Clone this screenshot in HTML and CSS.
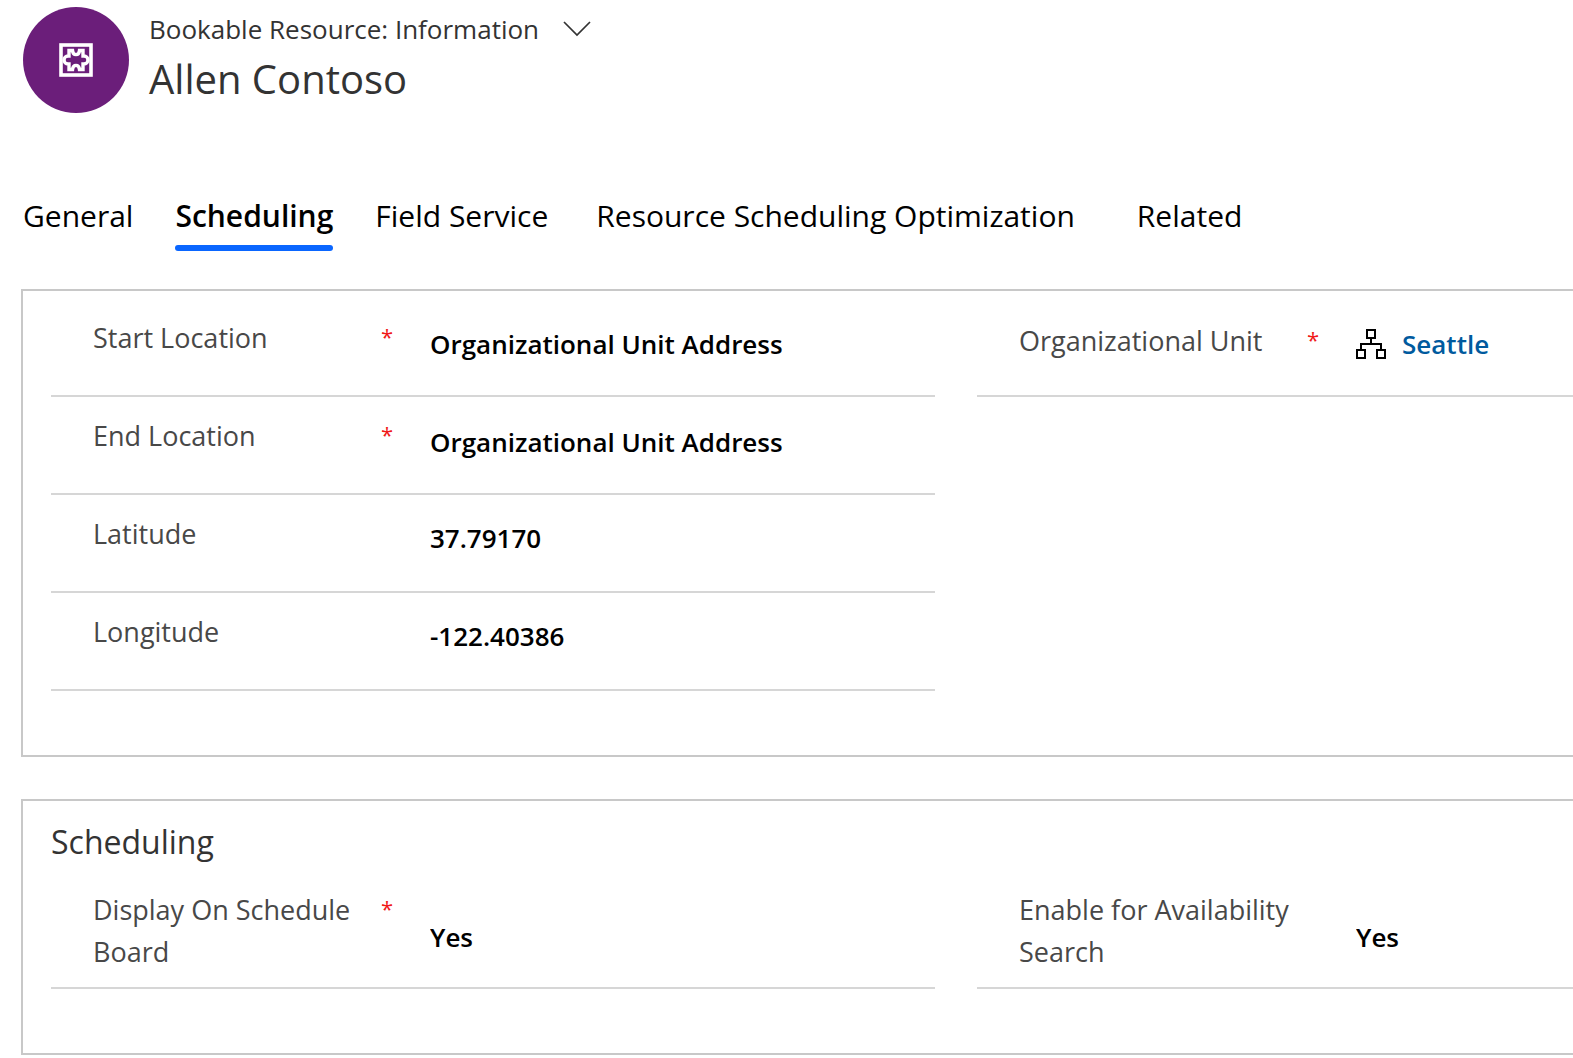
FILE: index.html
```html
<!DOCTYPE html>
<html lang="en">
<head>
<meta charset="utf-8">
<meta name="viewport" content="width=device-width, initial-scale=1">
<title>Bookable Resource: Allen Contoso</title>
<link rel="stylesheet" href="styles.css">
</head>
<body>
<header class="record-header">
  <div class="record-avatar">
    <svg class="record-icon" viewBox="0 0 34 34" aria-hidden="true">
      <rect x="2" y="2" width="30" height="30" fill="none" stroke="#fff" stroke-width="3.600"/>
      <path d="M10 7.500H13.500C14 13 20 13 20.500 7.500H24V13H25A4 4 0 0 1 25 21H24V26.500H20.500C20 21 14 21 13.500 26.500H10V21H9A4 4 0 0 1 9 13H10Z" fill="none" stroke="#fff" stroke-width="3.400"/>
    </svg>
  </div>
  <div class="record-titles">
    <button class="form-switcher" type="button">
      <span>Bookable Resource: Information</span>
      <svg class="chevron" viewBox="0 0 28 16" aria-hidden="true"><path d="M1 1L14 14L27 1" fill="none" stroke="#333" stroke-width="1.700"/></svg>
    </button>
    <h1 class="record-name">Allen Contoso</h1>
  </div>
</header>

<nav class="tabs" role="tablist">
  <button class="tab" type="button" role="tab">General</button>
  <button class="tab tab-active" type="button" role="tab" aria-selected="true">Scheduling</button>
  <button class="tab" type="button" role="tab">Field Service</button>
  <button class="tab tab-long" type="button" role="tab">Resource Scheduling Optimization</button>
  <button class="tab tab-related" type="button" role="tab">Related</button>
</nav>

<main class="sections">
  <section class="card">
    <div class="columns">
      <div class="column">
        <div class="field">
          <label class="label" for="start-location">Start Location</label>
          <span class="required">*</span>
          <select class="value" id="start-location"><option>Organizational Unit Address</option></select>
        </div>
        <div class="field">
          <label class="label" for="end-location">End Location</label>
          <span class="required">*</span>
          <select class="value" id="end-location"><option>Organizational Unit Address</option></select>
        </div>
        <div class="field">
          <label class="label" for="latitude">Latitude</label>
          <input class="value value-number" id="latitude" type="text" value="37.79170">
        </div>
        <div class="field">
          <label class="label" for="longitude">Longitude</label>
          <input class="value value-number" id="longitude" type="text" value="-122.40386">
        </div>
      </div>
      <div class="column">
        <div class="field field-lookup">
          <span class="label">Organizational Unit</span>
          <span class="required">*</span>
          <div class="value lookup">
            <svg class="org-icon" viewBox="0 0 30 30" aria-hidden="true"><path d="M11 1H19V9H11ZM1 21H9V29H1ZM21 21H29V29H21ZM15 10V15M5 20V15H25V20" fill="none" stroke="#000" stroke-width="2"/></svg>
            <a class="lookup-link" href="#seattle">Seattle</a>
          </div>
        </div>
      </div>
    </div>
  </section>

  <section class="card">
    <h2 class="card-title">Scheduling</h2>
    <div class="columns">
      <div class="column">
        <div class="field">
          <label class="label" for="display-board">Display On Schedule Board</label>
          <span class="required">*</span>
          <select class="value" id="display-board"><option>Yes</option><option>No</option></select>
        </div>
      </div>
      <div class="column">
        <div class="field">
          <label class="label" for="availability">Enable for Availability Search</label>
          <select class="value" id="availability"><option>Yes</option><option>No</option></select>
        </div>
      </div>
    </div>
  </section>
</main>
</body>
</html>
```
FILE: styles.css
```css
* {
  box-sizing: border-box;
}

body {
  margin: 0;
  background: #fff;
  color: #333;
  font-family: "Segoe UI", "Open Sans", "Noto Sans", sans-serif;
  font-size: 27px;
  line-height: 42px;
  overflow-x: hidden;
}

button,
input,
select {
  margin: 0;
  padding: 0;
  border: 0;
  background: none;
  color: inherit;
  font: inherit;
}

/* Record header */
.record-header {
  display: flex;
  gap: 20px;
  padding: 7px 23px 0;
}

.record-avatar {
  display: flex;
  flex: none;
  align-items: center;
  justify-content: center;
  width: 106px;
  height: 106px;
  border-radius: 50%;
  background: #6b1e7a;
}

.record-icon {
  width: 34px;
  height: 34px;
}

.form-switcher {
  display: flex;
  align-items: center;
  gap: 24px;
  font-size: 26px;
  line-height: 44px;
  white-space: nowrap;
}

.chevron {
  width: 28px;
  height: 16px;
}

.record-name {
  margin: 0;
  font-size: 40px;
  font-weight: 400;
  line-height: 56px;
}

/* Tabs */
.tabs {
  display: flex;
  gap: 42px;
  padding: 82px 23px 38px;
  color: #000;
  font-size: 30px;
}

.tab {
  padding-bottom: 8px;
  border-bottom: 6px solid transparent;
  white-space: nowrap;
}

.tab-active {
  position: relative;
  font-weight: 600;
}

.tab-active::after {
  content: "";
  position: absolute;
  right: 0;
  bottom: -6px;
  left: 0;
  height: 6px;
  border-radius: 3px;
  background: #0a66ff;
}

.tab-long {
  padding-right: 6px;
  padding-left: 6px;
}

.tab-related {
  margin-left: 14px;
}

/* Sections run off the right edge of the window */
.sections {
  display: flex;
  flex-direction: column;
  gap: 42px;
  padding-left: 21px;
}

.card {
  padding: 8px 0 64px 28px;
  border: 2px solid #c8c8c8;
  border-right: 0;
}

.card-title {
  margin: 0;
  padding: 12px 0 8px;
  font-size: 32px;
  font-weight: 400;
}

.columns {
  display: grid;
  grid-template-columns: 884fr 596fr;
  align-items: start;
  gap: 42px;
}

.field {
  display: grid;
  grid-template-columns: 288px 49px 1fr;
  align-content: start;
  min-height: 98px;
  padding: 18px 0 14px 42px;
  border-bottom: 2px solid #d6d6d6;
}

.label {
  color: #484848;
}

.required {
  color: #f01818;
  font-size: 22px;
  line-height: 38px;
}

.value {
  grid-column: 3;
  align-self: center;
  width: 100%;
  height: 42px;
  margin: 6px 0 -6px;
  appearance: none;
  color: #000;
  font-size: 26px;
  font-weight: 600;
}

.value-number {
  margin: 4px 0 -4px;
}

.field-lookup {
  padding-top: 21px;
}

.lookup {
  display: flex;
  align-items: center;
  gap: 16px;
  margin: 3px 0 -3px;
}

.org-icon {
  width: 30px;
  height: 30px;
}

.lookup-link {
  color: #005a9e;
  text-decoration: none;
}
```
